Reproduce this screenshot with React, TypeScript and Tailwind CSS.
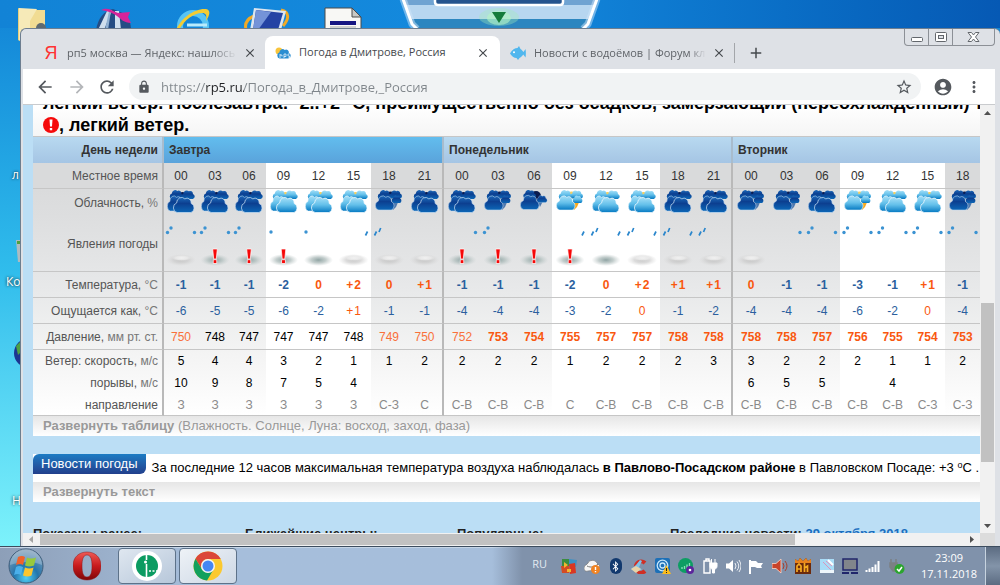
import type { ReactNode } from "react";
import {
  MdAccountCircle,
  MdAdd,
  MdArrowBack,
  MdArrowForward,
  MdClose,
  MdLock,
  MdMoreVert,
  MdRefresh,
  MdStarBorder,
} from "react-icons/md";
import { FaBluetoothB } from "react-icons/fa";

type Sky = "full" | "part" | "few";
type Precip = "snow" | "rain" | "flake" | "";
type Fog = "haze" | "mist" | "alert" | "";

interface Hour {
  time: string;
  width: string;
  sky: Sky;
  left: Precip;
  right: Precip;
  fog: Fog;
  temp: string;
  feels: string;
  pressure: number;
  wind: number;
  gust: string;
  dir: string;
}

const h = (
  time: string, width: string, sky: Sky, left: Precip, right: Precip, fog: Fog,
  temp: string, feels: string, pressure: number, wind: number, gust: string, dir: string
): Hour => ({ time, width, sky, left, right, fog, temp, feels, pressure, wind, gust, dir });

const days: { name: string; hours: Hour[] }[] = [
  {
    name: "Завтра",
    hours: [
      h("00", "w-[34px]", "full", "snow", "snow", "haze", "-1", "-6", 750, 5, "10", "З"),
      h("03", "w-[34px]", "full", "snow", "snow", "alert", "-1", "-5", 748, 4, "9", "З"),
      h("06", "w-[34px]", "full", "snow", "", "alert", "-1", "-5", 747, 4, "8", "З"),
      h("09", "w-[35px]", "full", "flake", "", "alert", "-2", "-6", 747, 3, "7", "З"),
      h("12", "w-[35px]", "full", "flake", "", "mist", "0", "-2", 747, 2, "5", "З"),
      h("15", "w-[35px]", "full", "", "rain", "haze", "+2", "+1", 748, 1, "4", "З"),
      h("18", "w-[36px]", "part", "rain", "", "haze", "0", "-1", 749, 1, "", "С-З"),
      h("21", "w-[37px]", "full", "", "", "haze", "+1", "-1", 750, 2, "", "С"),
    ],
  },
  {
    name: "Понедельник",
    hours: [
      h("00", "w-[36px]", "full", "", "snow", "alert", "-1", "-4", 752, 2, "", "С-В"),
      h("03", "w-[36px]", "part", "snow", "", "alert", "-1", "-4", 753, 2, "", "С-В"),
      h("06", "w-[36px]", "few", "", "", "alert", "-1", "-4", 754, 2, "", "С-В"),
      h("09", "w-[36px]", "part", "", "rain", "alert", "-2", "-3", 755, 1, "", "С"),
      h("12", "w-[36px]", "full", "rain", "rain", "mist", "0", "-2", 757, 2, "", "С-В"),
      h("15", "w-[36px]", "full", "rain", "rain", "haze", "+2", "0", 757, 2, "", "С-В"),
      h("18", "w-[36px]", "full", "rain", "rain", "haze", "+1", "-1", 758, 2, "", "С-В"),
      h("21", "w-[37px]", "full", "rain", "", "haze", "+1", "-2", 758, 3, "", "С-В"),
    ],
  },
  {
    name: "Вторник",
    hours: [
      h("00", "w-[36px]", "part", "", "", "haze", "0", "-4", 758, 3, "6", "С-В"),
      h("03", "w-[35px]", "part", "", "snow", "", "-1", "-4", 758, 2, "5", "С-В"),
      h("06", "w-[36px]", "full", "snow", "snow", "", "-1", "-4", 757, 2, "5", "С-В"),
      h("09", "w-[35px]", "part", "snow", "snow", "", "-3", "-6", 756, 2, "", "С-В"),
      h("12", "w-[35px]", "full", "snow", "snow", "", "-1", "-2", 755, 1, "4", "С-В"),
      h("15", "w-[35px]", "full", "snow", "snow", "", "+1", "0", 754, 1, "", "С-З"),
      h("18", "w-[35px]", "part", "snow", "snow", "", "-1", "-4", 753, 2, "", "С-З"),
    ],
  },
];

const isDay = (t: string) => t === "09" || t === "12" || t === "15";

const CLOUD =
  "M3 10a3 3 0 0 1-.4-5.9A3.6 3.6 0 0 1 8.6 1.500a3 3 0 0 1 4.600 2.900A2.900 2.900 0 0 1 13 10z";

function Defs() {
  return (
    <svg className="absolute h-0 w-0" aria-hidden="true">
      <defs>
        <linearGradient id="night" x1="0" y1="0" x2="0" y2="1">
          <stop offset="0" stopColor="#1c68b8" />
          <stop offset=".4" stopColor="#0c3f90" />
          <stop offset="1" stopColor="#0c66b6" />
        </linearGradient>
        <linearGradient id="day" x1="0" y1="0" x2="0" y2="1">
          <stop offset="0" stopColor="#a5e0f8" />
          <stop offset=".5" stopColor="#62bfea" />
          <stop offset="1" stopColor="#0579c2" />
        </linearGradient>
        <radialGradient id="mist">
          <stop offset="0" stopColor="#8fa3a3" />
          <stop offset=".5" stopColor="#b4c1c0" stopOpacity=".8" />
          <stop offset="1" stopColor="#c8d0d0" stopOpacity="0" />
        </radialGradient>
        <radialGradient id="haze">
          <stop offset="0" stopColor="#c2c2c2" stopOpacity=".9" />
          <stop offset=".5" stopColor="#cccccc" stopOpacity=".7" />
          <stop offset="1" stopColor="#d8d8d8" stopOpacity="0" />
        </radialGradient>
        <radialGradient id="hazeTop">
          <stop offset="0" stopColor="#f2f2f2" />
          <stop offset=".6" stopColor="#ececec" stopOpacity=".8" />
          <stop offset="1" stopColor="#e6e6e6" stopOpacity="0" />
        </radialGradient>
        <radialGradient id="orb" cx=".5" cy=".85" r=".8">
          <stop offset="0" stopColor="#4fd0f5" />
          <stop offset=".45" stopColor="#2375ac" />
          <stop offset="1" stopColor="#7d9cb8" />
        </radialGradient>
        <linearGradient id="opera" x1="0" y1="0" x2="0" y2="1">
          <stop offset="0" stopColor="#f05a55" />
          <stop offset=".5" stopColor="#c81a1c" />
          <stop offset="1" stopColor="#7e0508" />
        </linearGradient>
      </defs>
    </svg>
  );
}

function SkyIcon({ sky, light }: { sky: Sky; light: boolean }) {
  const fill = light ? "url(#day)" : "url(#night)";
  const edge = light ? "#f4fbff" : "#c4daf0";
  const star = light ? "#f9cf5c" : "#0b1c50";
  return (
    <svg viewBox="0 1 28 23" className="mx-auto mb-0.5 block h-[23px] w-7" aria-hidden="true">
      {sky === "full" && (
        <g fill={fill}>
          <circle cx="15.500" cy="6" r="3" fill={star} />
          <path d={CLOUD} transform="translate(2.500 .5) scale(.9 1)" />
          <path d={CLOUD} transform="translate(14 1) scale(.9 .9)" />
          <path d={CLOUD} transform="translate(0 6) scale(1.100 1.600)" stroke={edge} strokeWidth=".4" />
          <path d={CLOUD} transform="translate(6 7.500) scale(1.380 1.600)" stroke={edge} strokeWidth=".5" />
        </g>
      )}
      {sky === "part" && (
        <g fill={fill}>
          <path d="M17 12l7-1-3 7-3 3z" fill={light ? "#f7a91c" : "#4d78ae"} />
          <circle cx="15.500" cy="6" r="3.500" fill={star} />
          <path d={CLOUD} transform="translate(2.500 .5) scale(.9 1)" />
          <path d={CLOUD} transform="translate(14 1) scale(.85 .85)" />
          <path d={CLOUD} transform="translate(16.500 6) scale(.65 .8)" />
          <path d={CLOUD} transform="translate(0 6) scale(1.250 1.500)" stroke={edge} strokeWidth=".4" />
        </g>
      )}
      {sky === "few" && (
        <g fill={fill}>
          <circle cx="16" cy="7" r="5" fill="#0b1c50" />
          <path d="M17 12l6 0-3 6z" fill="#4d78ae" />
          <path d={CLOUD} transform="translate(3 .5) scale(.85 .9)" />
          <path d={CLOUD} transform="translate(16.500 6) scale(.7 .75)" stroke={edge} strokeWidth=".4" />
          <path d={CLOUD} transform="translate(0 5.500) scale(1.250 1.500)" stroke={edge} strokeWidth=".4" />
        </g>
      )}
    </svg>
  );
}

function Phenomena({ hour }: { hour: Hour }) {
  const { left, right, fog } = hour;
  return (
    <svg viewBox="0 0 34 52" className="mx-auto block h-[52px] w-full" aria-hidden="true">
      <g fill="#3c93d2">
        {left === "snow" && (
          <>
            <circle cx="3.500" cy="14.500" r="1.700" />
            <circle cx="7" cy="10" r="1.700" />
          </>
        )}
        {left === "flake" && <circle cx="4.500" cy="14" r="1.700" />}
        {right === "snow" && <circle cx="30.500" cy="14.500" r="1.700" />}
      </g>
      <g stroke="#2a86cc" strokeWidth="1.700">
        {left === "rain" && <path d="M2.500 17.500l2-4M7 14l1.700-4" />}
        {right === "rain" && <path d="M29 17.500l2-4" />}
      </g>
      {fog === "haze" && (
        <>
          <ellipse cx="17" cy="42" rx="15" ry="6" fill="url(#haze)" />
          <ellipse cx="17.500" cy="40" rx="10" ry="3" fill="url(#hazeTop)" />
        </>
      )}
      {(fog === "mist" || fog === "alert") && (
        <ellipse cx="17" cy="42" rx="14.500" ry="6" fill="url(#mist)" />
      )}
      {fog === "alert" && (
        <g fill="#f60808" stroke="#fff" strokeWidth=".7">
          <path d="M14.700 31h4.600l-1 10h-2.600z" />
          <rect x="15.200" y="41.800" width="3.600" height="3.600" />
        </g>
      )}
    </svg>
  );
}

interface RowProps {
  label: ReactNode;
  shade: string;
  height: string;
  line?: boolean;
  cell: (hour: Hour) => ReactNode;
}

function Row({ label, shade, height, line = true, cell }: RowProps) {
  const rule = line ? "border-b border-[#c6c6c6]" : "";
  return (
    <tr className={height}>
      <th scope="row" className={`border-r-2 border-r-[#b9b9b9] p-0 pr-1 text-right font-normal text-[#555] ${rule} ${shade}`}>
        {label}
      </th>
      {days.map((day, d) =>
        day.hours.map((hour, i) => {
          const last = i === day.hours.length - 1 && d < 2;
          return (
            <td
              key={`${d}-${i}`}
              className={`p-0 text-center ${rule} ${isDay(hour.time) ? "bg-white" : shade} ${
                last ? "border-r-2 border-r-[#b9b9b9]" : ""
              }`}
            >
              {cell(hour)}
            </td>
          );
        })
      )}
    </tr>
  );
}

const tone = (v: string) => (v.startsWith("-") ? "text-[#2b5f9e]" : "text-[#f9580f]");
const signed = (v: string) => v.replace("+", "+\u200a");

const pressureTone = (p: number) => {
  if (p >= 753) return "font-bold text-[#f9580f]";
  if (p >= 749) return "text-[#f9703a]";
  return "text-black";
};

function Forecast() {
  return (
    <table className="w-full table-fixed border-separate border-spacing-0 border-t border-[#c6c6c6] text-xs">
      <colgroup>
        <col className="w-[131px]" />
        {days.map((day, d) => day.hours.map((hour, i) => <col key={`${d}-${i}`} className={hour.width} />))}
      </colgroup>
      <thead>
        <tr className="h-[26px] text-[#333]">
          <th className="border-r-2 border-[#a8bccd] bg-linear-to-b from-[#b8d9f0] to-[#a5c5e4] p-0 pr-1 text-right">
            День недели
          </th>
          {days.map((day, d) => (
            <th
              key={day.name}
              colSpan={day.hours.length}
              className={`bg-linear-to-b p-0 pl-[5px] text-left ${
                d === 0 ? "from-[#62bdee] to-[#5aa3db]" : "from-[#b8d9f0] to-[#a5c5e4]"
              } ${d < 2 ? "border-r-2 border-[#a8bccd]" : ""}`}
            >
              {day.name}
            </th>
          ))}
        </tr>
      </thead>
      <tbody>
        <Row label="Местное время" height="h-[26px]" shade="bg-[#d9dadb]" cell={(x) => <span className="text-[#333]">{x.time}</span>} />
        <Row
          label={<>Облачность, <span className="text-[#777]">%</span></>}
          height="h-[27px]"
          line={false}
          shade="bg-linear-to-b from-[#dadbdc] to-[#dddedf]"
          cell={(x) => <SkyIcon sky={x.sky} light={isDay(x.time)} />}
        />
        <Row
          label="Явления погоды"
          height="h-[56px]"
          shade="bg-linear-to-b from-[#dddedf] to-[#e5e6e7]"
          cell={(x) => <Phenomena hour={x} />}
        />
        <Row
          label={<>Температура, <span className="text-[#777]">°C</span></>}
          height="h-[26px]"
          shade="bg-linear-to-b from-[#e5e6e7] to-[#e9eaeb]"
          cell={(x) => <b className={tone(x.temp)}>{signed(x.temp)}</b>}
        />
        <Row
          label={<>Ощущается как, <span className="text-[#777]">°C</span></>}
          height="h-[26px]"
          shade="bg-linear-to-b from-[#e9eaeb] to-[#eeefef]"
          cell={(x) => <span className={tone(x.feels)}>{signed(x.feels)}</span>}
        />
        <Row
          label={<>Давление, <span className="text-[#777]">мм рт. ст.</span></>}
          height="h-[26px]"
          shade="bg-linear-to-b from-[#eeefef] to-[#f3f3f3]"
          cell={(x) => <span className={pressureTone(x.pressure)}>{x.pressure}</span>}
        />
        <Row
          label={<>Ветер: скорость, <span className="text-[#777]">м/с</span></>}
          height="h-[22px]"
          line={false}
          shade="bg-linear-to-b from-[#f3f3f3] to-[#f7f7f7]"
          cell={(x) => x.wind}
        />
        <Row
          label={<>порывы, <span className="text-[#777]">м/с</span></>}
          height="h-[22px]"
          line={false}
          shade="bg-linear-to-b from-[#f7f7f7] to-[#fbfbfb]"
          cell={(x) => x.gust}
        />
        <Row
          label="направление"
          height="h-[22px]"
          shade="bg-linear-to-b from-[#fbfbfb] to-white"
          cell={(x) => <span className="text-[#8a8a8a]">{x.dir}</span>}
        />
      </tbody>
    </table>
  );
}

function Expander({ title, note }: { title: string; note?: string }) {
  return (
    <button className="block h-5 w-full bg-linear-to-b from-[#e6e6e6] to-white pl-2.5 text-left text-[13px] leading-5 whitespace-nowrap text-[#999]">
      <b>{title}</b> {note}
    </button>
  );
}

function Page() {
  return (
    <main className="min-w-0 flex-1 overflow-hidden bg-[#bbdef5] pl-2.5 font-['Liberation_Sans',Arial,sans-serif]">
      <div className="h-[31px] overflow-hidden bg-linear-to-b from-white to-[#f5f5f5] pl-2.5">
        <div className="-mt-[13px] text-lg leading-[22px] font-bold whitespace-nowrap text-black">
          <p>легкий ветер. Послезавтра: -2..+2 °C, преимущественно без осадков, замерзающий (переохлажденный) туман</p>
          <p className="flex items-center">
            <svg viewBox="0 0 16 16" className="h-4 w-4" aria-hidden="true">
              <circle cx="8" cy="8" r="8" fill="#f50a0a" />
              <path d="M6.500 2.500h3l-.5 7H7zM6.800 11h2.400v2.200H6.800z" fill="#fff" />
            </svg>
            , легкий ветер.
          </p>
        </div>
      </div>
      <Forecast />
      <Expander title="Развернуть таблицу" note="(Влажность. Солнце, Луна: восход, заход, фаза)" />
      <section className="mt-[18px] bg-white">
        <div className="flex h-7 items-start whitespace-nowrap">
          <h2 className="h-5 rounded-tl-md rounded-br-md bg-linear-to-b from-[#1c7cc4] to-[#213f8c] px-2 text-[13px] leading-5 text-white">
            Новости погоды
          </h2>
          <p className="pl-1.5 text-[13px] leading-[27px] text-black">
            За последние 12 часов максимальная температура воздуха наблюдалась <b>в Павлово-Посадском районе</b> в Павловском Посаде: +3{" "}
            <sup className="text-[9px] leading-none">o</sup>C .
          </p>
        </div>
        <Expander title="Развернуть текст" />
      </section>
      <footer className="mt-[22px] flex text-[13px] font-bold whitespace-nowrap text-[#222]">
        <h3 className="w-[212px]">Показаны ранее:</h3>
        <h3 className="w-[212px]">Ближайшие центры:</h3>
        <h3 className="w-[213px]">Популярные:</h3>
        <h3>
          Последние новости: <a href="#news" className="text-[#1a6fc0]">29 октября 2018</a>
        </h3>
      </footer>
    </main>
  );
}

function Tabs() {
  return (
    <div className="flex h-10 items-end pl-3 text-[11px] text-[#5f6368]">
      <div className="flex h-8 w-[230px] items-center px-2">
        <span className="w-4 text-center font-['Liberation_Sans',sans-serif] text-lg text-[#f33]">Я</span>
        <span className="ml-2 flex-1 overflow-hidden mask-r-from-85% whitespace-nowrap">рп5 москва — Яндекс: нашлось</span>
        <button aria-label="Закрыть" className="ml-1.5 text-[#45494d]"><MdClose size={14} /></button>
      </div>
      <div className="flex h-[33px] w-[235px] items-center rounded-t-lg bg-white px-2.5 text-[#45494d]">
        <svg viewBox="0 0 16 12" className="h-3 w-4" aria-hidden="true">
          <circle cx="4" cy="4" r="3.500" fill="#f8c43c" />
          <path d={CLOUD} transform="translate(2 1.500) scale(.9 1)" fill="#2a8ed2" />
          <path d="M5 7v4M5 8h2v1.500M9 7v4M9 7h2v2.500H9M13 7h1.500M13 7v2h1.500v2H13" fill="none" stroke="#fff" strokeWidth=".7" />
        </svg>
        <span className="ml-2 flex-1 overflow-hidden whitespace-nowrap">Погода в Дмитрове, Россия</span>
        <button aria-label="Закрыть"><MdClose size={14} /></button>
      </div>
      <div className="flex h-8 w-[234px] items-center pr-2 pl-2.5">
        <svg viewBox="0 0 16 14" className="h-3.5 w-4" aria-hidden="true">
          <path d="M0 7.500C2 3.500 5 2 7.500 2L9 0l1.500 3C12 4 13 5.500 13.500 6l2-3c.5 2.500.5 6 0 8.500l-2.200-3C12 10.500 10.500 11.500 9.500 12L8 14l-1.500-2C4 12 1.500 10 0 7.500z" fill="#51b7ee" />
          <circle cx="4" cy="6.300" r="1" fill="#fff" />
        </svg>
        <span className="ml-2 flex-1 overflow-hidden mask-r-from-90% whitespace-nowrap">Новости с водоёмов | Форум клуба</span>
        <button aria-label="Закрыть" className="ml-1.5 text-[#45494d]"><MdClose size={14} /></button>
      </div>
      <div className="mb-1.5 h-5 w-px bg-[#a3a6aa]" />
      <button aria-label="Новая вкладка" className="flex h-8 items-center pl-3 text-[#45494d]"><MdAdd size={18} /></button>
      <div className="ml-auto flex h-[17px] self-start rounded-b-sm border border-t-0 border-[#8c9096] text-[#63676c]">
        <button aria-label="Свернуть" className="w-[24px] border-r border-[#8c9096]">
          <svg viewBox="0 0 24 16" className="h-4 w-6"><rect x="6.500" y="8.500" width="11" height="4" rx="1" fill="#fff" stroke="currentColor" /></svg>
        </button>
        <button aria-label="Развернуть" className="w-[24px] border-r border-[#8c9096]">
          <svg viewBox="0 0 24 16" className="h-4 w-6">
            <rect x="6.500" y="3.500" width="11" height="9" rx="1" fill="#fff" stroke="currentColor" />
            <rect x="9.500" y="6.500" width="5" height="3" fill="#dee1e6" stroke="currentColor" />
          </svg>
        </button>
        <button aria-label="Закрыть окно" className="w-[41px]">
          <svg viewBox="0 0 40 16" className="h-4 w-10">
            <path d="M15 3.500h3.500L20.500 6l2-2.500H26L22.500 8l3.500 4.500h-3.500l-2-2.500-2 2.500H15L18.500 8z" fill="#fff" stroke="currentColor" />
          </svg>
        </button>
      </div>
    </div>
  );
}

function Toolbar() {
  return (
    <div className="flex h-[35px] items-center bg-white pr-3 pl-3 text-[#55595e]">
      <button aria-label="Назад"><MdArrowBack size={20} /></button>
      <button aria-label="Вперёд" className="ml-3 text-[#b4b6b9]"><MdArrowForward size={20} /></button>
      <button aria-label="Обновить" className="ml-2.5"><MdRefresh size={20} /></button>
      <div className="ml-3 flex h-[27px] flex-1 items-center rounded-full bg-[#f1f3f4] px-2">
        <MdLock size={14} />
        <label htmlFor="url" className="sr-only">Адрес</label>
        {/* the host name is drawn darker than the rest of the address */}
        <input
          id="url"
          defaultValue="https://rp5.ru/Погода_в_Дмитрове,_Россия"
          className="ml-2.5 h-5 flex-1 bg-[linear-gradient(90deg,#80868b_44px,#202124_44px,#202124_83px,#80868b_83px)] bg-clip-text text-[13px] leading-5 text-transparent outline-none"
        />
        <button aria-label="В закладки"><MdStarBorder size={18} /></button>
      </div>
      <button aria-label="Профиль" className="ml-3"><MdAccountCircle size={20} /></button>
      <button aria-label="Меню" className="ml-3"><MdMoreVert size={18} /></button>
    </div>
  );
}

function Browser() {
  return (
    <section className="flex min-h-0 flex-1 flex-col overflow-hidden rounded-t-md border-t border-l border-[#6d7e90] bg-[#dee1e6] pr-[5px] pl-0.5 font-['Open_Sans','Noto_Sans',sans-serif]">
      <Tabs />
      <Toolbar />
      <div className="flex min-h-0 flex-1 border-t border-[#c9cbce]">
        <Page />
        <div className="flex w-[15px] flex-col items-center bg-[#f1f1f1]">
          <svg viewBox="0 0 15 15" className="h-[15px] w-[15px]"><path d="M4 10l3.500-4L11 10z" fill="#505050" /></svg>
          <div className="flex-[183]" />
          <div className="w-[13px] flex-[160] bg-[#c1c1c1]" />
          <div className="flex-[56]" />
          <svg viewBox="0 0 15 15" className="h-[15px] w-[15px]"><path d="M4 6l3.500 4L11 6z" fill="#505050" /></svg>
        </div>
      </div>
      <div className="flex h-[13px] items-center bg-[#f1f1f1]">
        <svg viewBox="0 0 17 13" className="h-[13px] w-[17px]"><path d="M10 3L6 6.500l4 3.500z" fill="#a3a3a3" /></svg>
        <div className="h-[11px] flex-[755] bg-[#c1c1c1]" />
        <div className="flex-[168]" />
        <svg viewBox="0 0 17 13" className="h-[13px] w-[17px]"><path d="M7 3l4 3.500L7 10z" fill="#505050" /></svg>
        <div className="h-full w-[15px] bg-[#dcdcdc]" />
      </div>
    </section>
  );
}

function DesktopIcons() {
  return (
    <div aria-hidden="true">
      <svg viewBox="0 0 30 38" className="absolute top-[7px] left-4 h-[38px] w-[30px]">
        <path d="M2 1l8 3v34l-8-5z" fill="#e6cf7c" />
        <path d="M8 3h21v35H8z" fill="#f1dc93" />
        <path d="M3 1l18 1-7 12v24L3 33z" fill="#f6eab8" />
        <circle cx="25" cy="21" r="5" fill="#5f6a70" />
      </svg>
      <svg viewBox="0 0 38 24" className="absolute top-1.5 left-[95px] h-6 w-[38px]">
        <path d="M1 24C3 12 9 5 18 3l12 5c4 4 6 10 6 16z" fill="#254d84" />
        <path d="M12 5l5-1-8 20H3zM20 5h4l2 19h-6z" fill="#cfdfee" />
        <path d="M14 5l2 0-3 19h-3z" fill="#8fb0d2" />
        <path d="M6 4c8-4 12 2 18 3l11-1-2 5 3 6c-7 0-10-4-14-7-4-3-9-5-16-6z" fill="#d6249a" />
      </svg>
      <svg viewBox="0 0 40 24" className="absolute top-1.5 left-[173px] h-6 w-10">
        <circle cx="20" cy="20" r="13" fill="none" stroke="#58c4f4" strokeWidth="6" />
        <path d="M14 19h20" stroke="#b9ebfc" strokeWidth="3" />
        <path d="M3 24C8 12 22 2 33 3c5 1 4 6 0 12 1-6 0-8-4-8C21 7 11 14 6 24z" fill="#f3cc33" />
      </svg>
      <svg viewBox="0 0 48 24" className="absolute top-1.5 left-[243px] h-6 w-12">
        <path d="M3 24c-2-8 3-12 8-14M38 4c9 2 8 9 2 16" fill="none" stroke="#f0a925" strokeWidth="3" />
        <path d="M11 2l32 3-5 19H7z" fill="#dbe5ef" />
        <path d="M13 4l27 3-5 17H10z" fill="#2443a4" />
        <path d="M13 4l15 2-13 18h-5z" fill="#7493d8" />
      </svg>
      <svg viewBox="0 0 40 24" className="absolute top-[7px] left-[323px] h-6 w-10">
        <path d="M2 24V1h27l9 9v14z" fill="#f8f8f5" stroke="#4b4b4b" />
        <path d="M29 1v9h9z" fill="#c8c8c4" stroke="#4b4b4b" />
        <path d="M7 14h26v4H7z" fill="#161682" />
        <path d="M7 20h26" stroke="#aaa" />
      </svg>
      {/* dock handle at the top edge of the screen */}
      <svg viewBox="0 0 204 30" className="absolute -top-px left-[398px] h-[30px] w-[204px]">
        <path d="M4 0h196l-12 30H16z" fill="#6fa3d2" />
        <path d="M8 6h188l-6 14H14z" fill="#b7d6f0" />
        <path d="M13 20h178l-4 10H17z" fill="#2c86c0" />
        <path d="M38 0h126v5H38z" fill="#25548e" />
        <path d="M37 0v3q0 3 3 3h122q3 0 3-3V0" fill="none" stroke="#fff" strokeWidth="2.500" />
        <path d="M5 0l9 25 5 5M199 0l-9 25-5 5" fill="none" stroke="#cfe6fa" strokeWidth="7" opacity=".5" />
        <path d="M5 0l9 25 5 5M199 0l-9 25-5 5" fill="none" stroke="#fff" strokeWidth="3" />
        <ellipse cx="101" cy="18" rx="20" ry="9" fill="#a2eeb6" opacity=".35" />
        <ellipse cx="101" cy="19" rx="12" ry="7" fill="#b6f5c4" opacity=".6" />
        <path d="M94 13h14l-7 11z" fill="#157c3c" />
      </svg>
      <span className="absolute top-[167px] left-3 text-xs text-white text-shadow-[0_0_3px_#000]">л</span>
      <svg viewBox="0 0 6 24" className="absolute top-[238px] left-4 h-6 w-1.5">
        <path d="M0 2h6v22H2z" fill="#aebbc0" />
        <path d="M1 3h5v3H1z" fill="#4ea03f" />
      </svg>
      <span className="absolute top-[274px] left-1.5 text-xs text-white text-shadow-[0_0_3px_#000]">Ко</span>
      <svg viewBox="0 0 30 30" className="absolute top-[338px] left-3.5 h-[30px] w-[30px]">
        <circle cx="15" cy="15" r="15" fill="#1c3590" />
        <path d="M2 8l6-6v11l-4 4z" fill="#4da142" />
      </svg>
      <span className="absolute top-[493px] left-3 text-xs text-white text-shadow-[0_0_3px_#000]">H</span>
    </div>
  );
}

function Tray({ children }: { children: ReactNode }) {
  return <svg viewBox="0 0 16 16" className="h-4 w-4" aria-hidden="true">{children}</svg>;
}

function TrayIcons() {
  return (
    <div className="flex w-[344px] items-center justify-between">
      <Tray>
        <path d="M1 1h7v7H1z" fill="#3b8c3f" />
        <path d="M0 8h8v7H1z" fill="#d34b24" />
        <path d="M8 1l8 1-1 7-7-1z" fill="#3d91c4" />
        <path d="M8 6l6-1 1 10-6 1z" fill="#d93722" />
        <path d="M3 4l4 3-4 3zM6 11h4v3H6z" fill="#f2b632" />
      </Tray>
      <Tray>
        <path d="M0 10c0-3 3-3 4-5 1-3 7-4 9 0l3 3-3 4-9 1c-3 1-4-1-4-3z" fill="#f6f6f6" stroke="#777" strokeWidth=".7" />
        <path d="M3 8c4 2 8 1 11-2" fill="none" stroke="#777" />
        <circle cx="11.500" cy="11.500" r="4.500" fill="#f08322" />
        <path d="M11.500 9v3M11.500 13v1.200" stroke="#fff" strokeWidth="1.400" />
      </Tray>
      <span className="flex h-4 w-4 items-center justify-center">
        <span className="flex h-4 w-3 items-center justify-center rounded-full bg-[#12396e] text-white"><FaBluetoothB size={11} /></span>
      </span>
      <Tray>
        <path d="M14 5a5.500 5.500 0 1 0 0 8" fill="none" stroke="#cf2f25" strokeWidth="4" />
        <path d="M9 2l2 1-3 6 3 3-7 2-4-3 5-4z" fill="#7ec3ea" />
        <path d="M0 11l5-3 5 3-5 4z" fill="#e9d2a6" />
      </Tray>
      <Tray>
        <rect width="15" height="15" rx="2" fill="#1d70b7" />
        <circle cx="7.500" cy="7.500" r="5.300" fill="none" stroke="#c7e6fa" strokeWidth="1.300" />
        <circle cx="7.500" cy="7.500" r="2.500" fill="none" stroke="#c7e6fa" strokeWidth="1.300" />
        <path d="M11.500 7l4.500 9H7z" fill="#fbbc1c" />
        <path d="M11.500 10v3M11.500 14v1" stroke="#222" />
      </Tray>
      <Tray>
        <circle cx="7.500" cy="7.500" r="7.500" fill="#0d9d63" />
        <path d="M4 11V9M6.500 11V8M9 11V6.500M11.500 9V5" stroke="#8ce0ba" strokeWidth="1.300" />
        <circle cx="12" cy="12" r="4" fill="#5b259b" />
        <circle cx="12" cy="12" r="1.300" fill="#fff" />
      </Tray>
      <Tray>
        <path d="M2 3h6v12H2zM4 1h3v2H4z" fill="none" stroke="#fff" strokeWidth="1.400" />
        <path d="M8 5h7v3c0 2-1 3-2.500 3v4h-2v-4C9 11 8 10 8 8zM9.500 1v4M13 1v4" fill="#fff" stroke="#fff" />
      </Tray>
      <Tray>
        <path d="M1 5.500h3L8 2v12l-4-3.500H1z" fill="#fff" />
        <path d="M10 5q2 3 0 6M12 3.500q3.500 4.500 0 9M14 2q4 6 0 12" fill="none" stroke="#e9edf2" />
      </Tray>
      <Tray>
        <path d="M1 2h2v14H1z" fill="#fff" />
        <path d="M3 3h5l2 2h5l-2 3 1 2H9L7 9H3z" fill="#fff" />
      </Tray>
      <Tray>
        <path d="M0 5.500h4L9 1v14l-5-4.500H0z" fill="#c8432a" stroke="#ffd7c7" strokeWidth=".8" />
        <path d="M11 5q2 3 0 6M13 3q4 5 0 10" fill="none" stroke="#a8402c" />
      </Tray>
      <Tray>
        <path d="M0 1l3 2 2-3 3 3 3-3 2 3 3-2v15H0z" fill="#6b2a0c" />
        <path d="M0 1l3 2 2-3 3 3 3-3 2 3 3-2v4H0z" fill="#e9831c" />
        <path d="M2 14V8l2-2 2 2v6M2 11h4M9.500 5v9M9.500 10l3-2v6" fill="none" stroke="#f5ab22" strokeWidth="1.700" />
      </Tray>
      <Tray>
        <path d="M1 1h14v14H1z" fill="#a9dcf7" />
        <path d="M1 12h14v3H1z" fill="#eef6fb" />
        <path d="M4 4l8 8M7 3l6 5" stroke="#dc93bb" />
        <path d="M9 2l5 5" stroke="#fff" strokeWidth="2" />
      </Tray>
      <Tray>
        <rect x="1" y="1" width="14" height="11" fill="#81858b" stroke="#20266b" strokeWidth="1.500" />
        <path d="M0 15h7M9 15h7" stroke="#20266b" strokeWidth="2" />
      </Tray>
      <Tray>
        <path d="M1.500 14v-2M4.500 14v-3.500M7.500 14V9M10.500 14V6.500M13.500 14V3" stroke="#fff" strokeWidth="2" />
      </Tray>
      <Tray>
        <path d="M1 5h7v4L6 13H4L1 9zM2 1v4M7 1v4" fill="#7b8084" stroke="#7b8084" strokeWidth="1.500" />
        <circle cx="10.500" cy="11" r="5" fill="#2ba52e" />
        <path d="M8 11l2 2 3-4" fill="none" stroke="#fff" strokeWidth="1.500" />
      </Tray>
    </div>
  );
}

function Taskbar() {
  return (
    <nav className="flex h-[39px] shrink-0 items-center border-t border-[#3c4c5e] bg-linear-to-r from-[#8d9fb8] via-[#a6bedb] via-20% to-[#a6bedb] font-['Open_Sans','Noto_Sans',sans-serif] shadow-[inset_0_1px_0_#c5d5e6]">
      <button aria-label="Пуск" className="ml-2">
        <svg viewBox="0 0 36 36" className="h-9 w-9">
          <circle cx="18" cy="18" r="17" fill="url(#orb)" stroke="#3e5d7a" />
          <path d="M2 17a16 16 0 0 1 32 0c-10-5-22-3-32 0z" fill="#fff" opacity=".25" />
          <path d="M10 9q4-2 7 0l-2 8q-3-2-7 0z" fill="#f0622b" />
          <path d="M19 9.500q4 2 9 0l-2 8q-5 2-9 0z" fill="#98c93c" />
          <path d="M8 19q3-2 7 0l-2 8q-3-2-7 0z" fill="#4ab0ea" />
          <path d="M17 19.500q4 2 8.500 0l-2 8q-4 2-8.500 0z" fill="#fbc62e" />
        </svg>
      </button>
      <button aria-label="Opera" className="ml-[29px]">
        <svg viewBox="0 0 28 30" className="h-[30px] w-7">
          <path fillRule="evenodd" d="M14 1C6 1 0 6 0 15s6 14 14 14 14-5 14-14S22 1 14 1zm0 3c4 0 5 5 5 11s-1 11-5 11-5-5-5-11 1-11 5-11z" fill="url(#opera)" stroke="#8b1618" strokeWidth=".5" />
        </svg>
      </button>
      <button aria-label="МегаФон" className="ml-[17px] flex h-9 w-[58px] items-center justify-center rounded-sm border border-[#5d7289] bg-linear-to-br from-[#dfe7f0] to-[#b7c7da]">
        <svg viewBox="0 0 30 30" className="h-[30px] w-[30px]">
          <circle cx="15" cy="15" r="15" fill="#fff" />
          <circle cx="15" cy="15" r="11" fill="#0b9b61" />
          <path d="M14.500 4v5M14.500 13v5M14.500 18v8" fill="none" stroke="#fff" strokeWidth="1.600" />
          <circle cx="13.500" cy="11" r="1.500" fill="#fff" />
          <path d="M17 20h2M20.500 20h2M24 20h2" stroke="#fff" strokeWidth="1.600" />
        </svg>
      </button>
      <button aria-label="Chrome" className="ml-[3px] flex h-9 w-[58px] items-center justify-center rounded-sm border border-[#5d7289] bg-linear-to-br from-[#eef2f7] to-[#cdd8e5]">
        <svg viewBox="0 0 30 30" className="h-[30px] w-[30px]">
          <circle cx="15" cy="15" r="14.500" fill="#fbc92f" />
          <path d="M2.500 7.700A14.500 14.500 0 0 1 27.700 8H15a7 7 0 0 0-6.500 9.500z" fill="#db4639" />
          <path d="M2.500 7.700A14.500 14.500 0 0 0 14 29.500l6.500-11a7 7 0 0 1-12-1z" fill="#12a05d" />
          <circle cx="15" cy="15" r="7" fill="#f4f4f4" />
          <circle cx="15" cy="15" r="5.500" fill="#4587f2" />
        </svg>
      </button>
      <div className="ml-auto flex h-full items-center bg-linear-to-r from-transparent to-[#8092ab] to-[30px] pl-10 text-[11px] text-white">
        <span className="mr-3.5 pb-1 text-[#e3eaf2]">RU</span>
        <TrayIcons />
        <time className="w-[80px] pl-2 text-center leading-4">
          23:09
          <br />
          17.11.2018
        </time>
        <button aria-label="Показать рабочий стол" className="h-full w-[15px] border-l border-[#c7d3df] bg-linear-to-b from-[#5c6c82] via-[#8394a9] to-[#5c6c82]" />
      </div>
    </nav>
  );
}

export default function App() {
  return (
    <div className="flex h-screen flex-col overflow-hidden">
      <Defs />
      <div className="relative flex min-h-0 flex-1 flex-col bg-linear-to-b from-[#1283d6] via-[#30bdec] to-[#7cf2fb] font-['Open_Sans',sans-serif]">
        <div className="h-7 shrink-0 bg-linear-to-r from-[#1283d6] via-[#148ade] to-[#0659b4]" />
        <DesktopIcons />
        <div className="relative flex min-h-0 flex-1 flex-col pl-5">
          <Browser />
        </div>
      </div>
      <Taskbar />
    </div>
  );
}
